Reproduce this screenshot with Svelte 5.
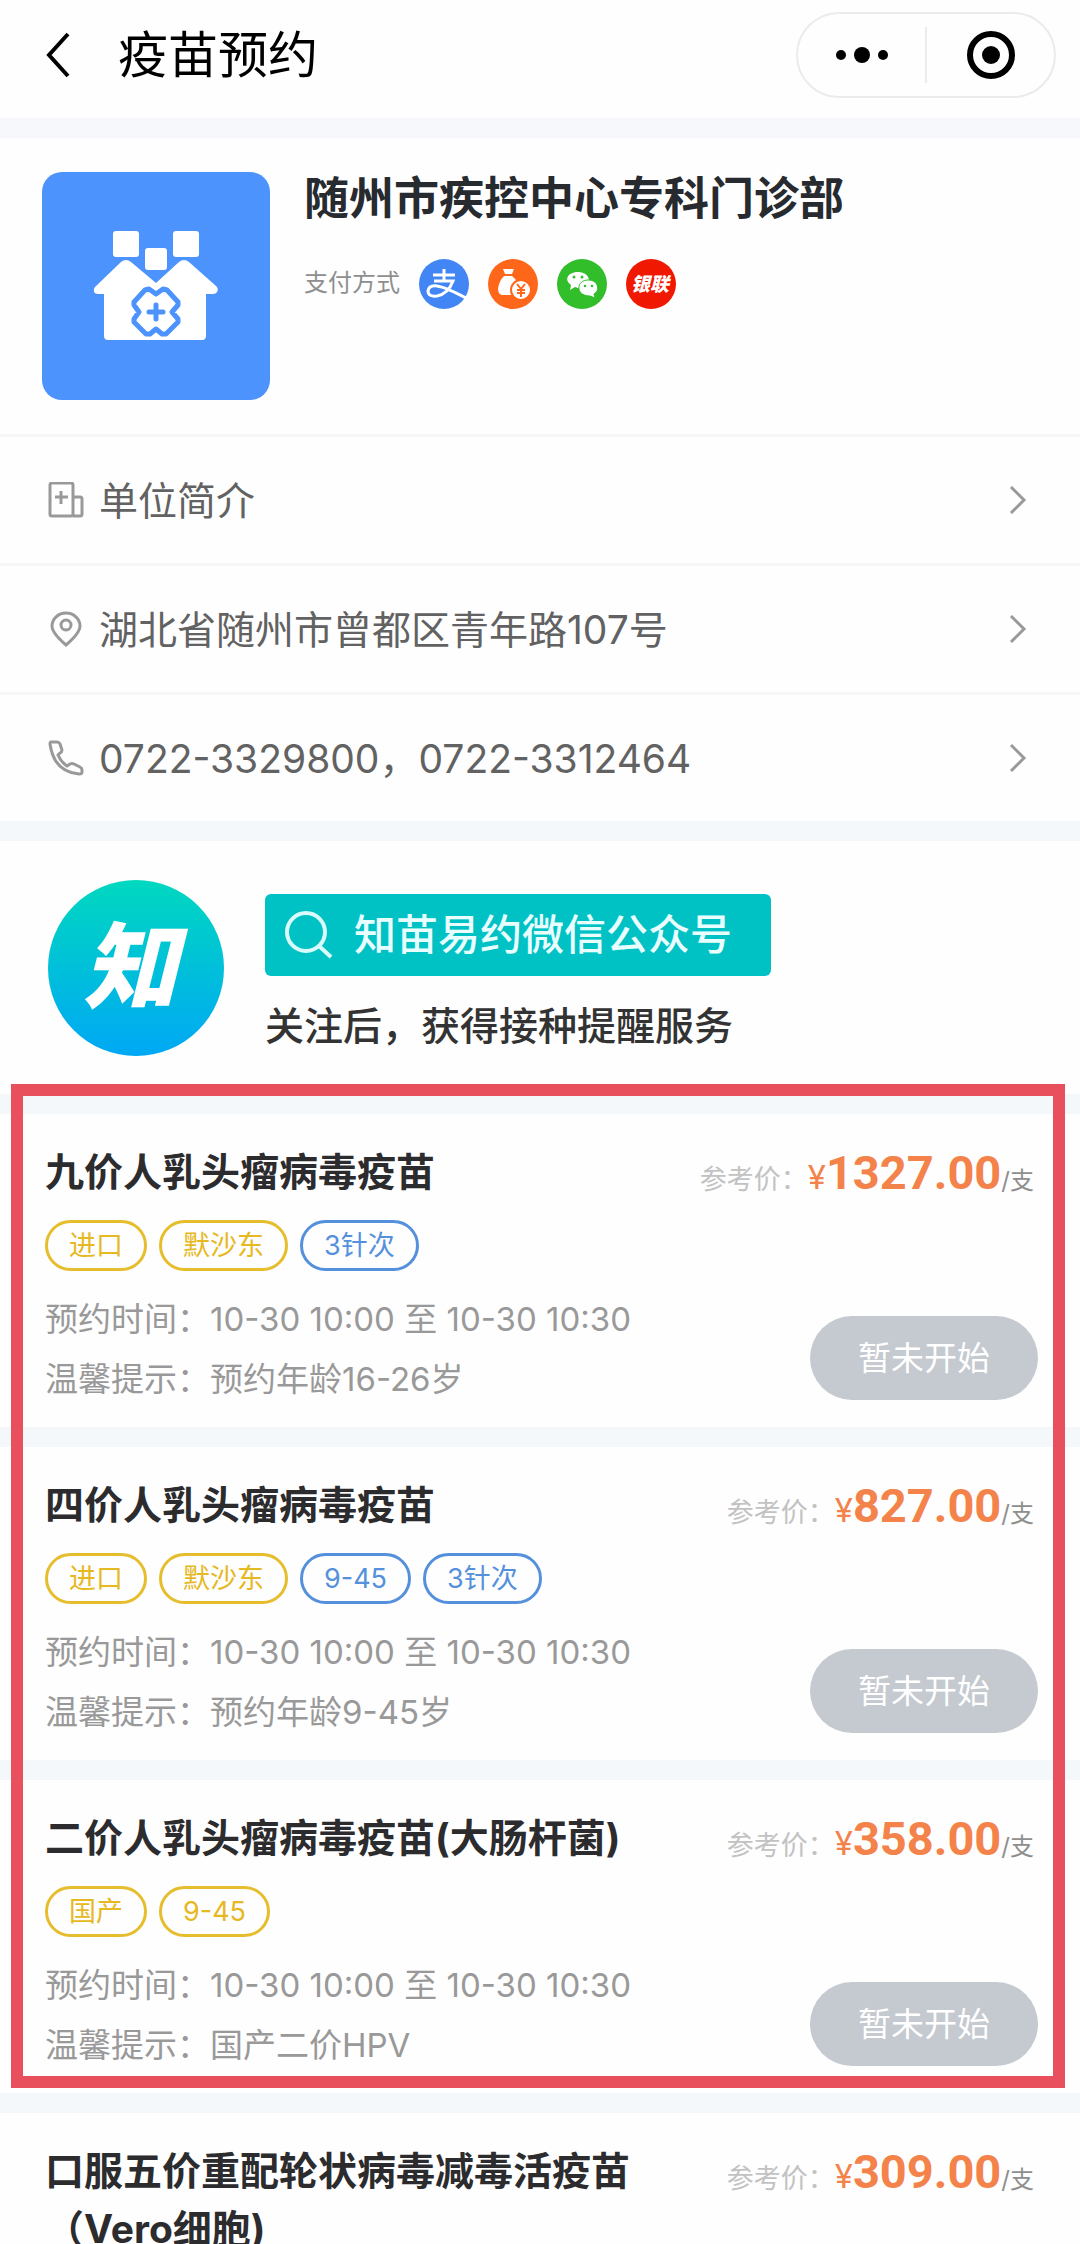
<script lang="ts">
	type Tag = { text: string; tone: 'gold' | 'blue' };
	type Vaccine = {
		name: string;
		price: string;
		tags: Tag[];
		time: string;
		hint: string;
	};

	const contacts = [
		{ icon: 'hospital', text: '单位简介', href: '#intro' },
		{ icon: 'pin', text: '湖北省随州市曾都区青年路107号', href: '#address' },
		{ icon: 'phone', text: '0722-3329800，0722-3312464', href: '#phone' }
	];

	const time = '10-30 10:00 至 10-30 10:30';

	const featured: Vaccine[] = [
		{
			name: '九价人乳头瘤病毒疫苗',
			price: '1327.00',
			tags: [
				{ text: '进口', tone: 'gold' },
				{ text: '默沙东', tone: 'gold' },
				{ text: '3针次', tone: 'blue' }
			],
			time,
			hint: '预约年龄16-26岁'
		},
		{
			name: '四价人乳头瘤病毒疫苗',
			price: '827.00',
			tags: [
				{ text: '进口', tone: 'gold' },
				{ text: '默沙东', tone: 'gold' },
				{ text: '9-45', tone: 'blue' },
				{ text: '3针次', tone: 'blue' }
			],
			time,
			hint: '预约年龄9-45岁'
		},
		{
			name: '二价人乳头瘤病毒疫苗(大肠杆菌)',
			price: '358.00',
			tags: [
				{ text: '国产', tone: 'gold' },
				{ text: '9-45', tone: 'gold' }
			],
			time,
			hint: '国产二价HPV'
		}
	];
</script>

{#snippet heading(name: string, price: string)}
	<div class="card-head">
		<h2>{name}</h2>
		<p class="price">
			<span class="price-label">参考价：</span><span class="yen">¥</span><strong>{price}</strong><span
				class="unit">/支</span
			>
		</p>
	</div>
{/snippet}

<div class="page">
	<header>
		<button class="back" aria-label="返回">
			<svg width="24" height="46" viewBox="0 0 24 46">
				<path d="M22 2 3 23 22 44" fill="none" stroke="#000" stroke-width="4" />
			</svg>
		</button>
		<h1>疫苗预约</h1>
		<div class="capsule">
			<button aria-label="更多">
				<svg width="52" height="18" viewBox="0 0 52 18">
					<circle cx="5" cy="9" r="5" />
					<circle cx="26" cy="9" r="8" />
					<circle cx="47" cy="9" r="5" />
				</svg>
			</button>
			<button aria-label="关闭">
				<svg width="50" height="50" viewBox="0 0 50 50">
					<circle cx="25" cy="25" r="21" fill="none" stroke="#000" stroke-width="6" />
					<circle cx="25" cy="25" r="9" />
				</svg>
			</button>
		</div>
	</header>

	<section class="clinic">
		<svg class="clinic-logo" viewBox="0 0 228 228">
			<rect width="228" height="228" rx="20" fill="#4d93fd" />
			<g fill="#fff">
				<rect x="71" y="59" width="26" height="26" rx="3" />
				<rect x="131" y="59" width="26" height="26" rx="3" />
				<rect x="103" y="76" width="22" height="22" rx="3" />
				<path
					d="M79 90q5-4 10 0l25 21 23-21q5-4 10 0l27 24q3 3 1 6-1 2-4 2h-7v42q0 4-4 4H66q-4 0-4-4v-42h-6q-3 0-4-2-1-3 1-5z"
				/>
			</g>
			<path
				d="M107 117l7 5 7-5 4 1 11 12v3l-6 7 6 7v3l-12 12h-4l-6-5-6 5h-4l-12-12v-3l5-7-5-7v-3l11-12z"
				fill="#fff"
				stroke="#4d93fd"
				stroke-width="5"
				stroke-linejoin="round"
			/>
			<path d="M114 133v14M107 140h14" stroke="#4d93fd" stroke-width="5" stroke-linecap="round" />
		</svg>
		<div>
			<h2>随州市疾控中心专科门诊部</h2>
			<div class="pay">
				<span>支付方式</span>
				<svg viewBox="0 0 50 50">
					<circle cx="25" cy="25" r="25" fill="#4285f4" />
					<path
						d="M14 16h22M25 10v12M15 22h19Q29 35 18 37 9 38 9 32q1-6 9-5 8 1 29 12"
						fill="none"
						stroke="#fff"
						stroke-width="3"
					/>
				</svg>
				<svg viewBox="0 0 50 50">
					<circle cx="25" cy="25" r="25" fill="#fe671a" />
					<path d="M15 10h11l-2 5h-7zM16 17h8q8 7 8 13 0 6-7 6H14q-4-1-4-6 1-8 6-13z" fill="#fff" />
					<circle cx="33" cy="31" r="10" fill="#fff" stroke="#fe671a" stroke-width="2" />
					<path
						d="m29 25 4 5 4-5M33 30v8M29 31h8M29 34h8"
						fill="none"
						stroke="#fe671a"
						stroke-width="2"
					/>
				</svg>
				<svg viewBox="0 0 50 50">
					<circle cx="25" cy="25" r="25" fill="#32bd2b" />
					<path d="M21 13c14 0 15 16 0 16l-3-1-5 3 1-5c-8-6-2-13 7-13z" fill="#fff" />
					<path
						d="M31 21c11 0 12 11 6 14l1 4-5-2c-15 0-14-16-2-16z"
						fill="#fff"
						stroke="#32bd2b"
						stroke-width="1"
					/>
					<g fill="#32bd2b">
						<circle cx="17" cy="18" r="1.500" />
						<circle cx="25" cy="18" r="1.500" />
						<circle cx="28" cy="27" r="1.300" />
						<circle cx="35" cy="27" r="1.300" />
					</g>
				</svg>
				<svg viewBox="0 0 50 50">
					<circle cx="25" cy="25" r="25" fill="#f01800" />
					<text class="union" x="24" y="32" text-anchor="middle">银联</text>
				</svg>
			</div>
		</div>
	</section>

	<nav>
		{#each contacts as item}
			<a href={item.href}>
				<svg class="row-icon" viewBox="0 0 36 36">
					{#if item.icon === 'hospital'}
						<rect x="2" y="1" width="23" height="33" rx="2" />
						<path d="M25 15h7q2 0 2 2v15q0 2-2 2h-7M13 9v13M7 15h13" />
					{:else if item.icon === 'pin'}
						<path d="M18 34Q4 22 4 15a14 13 0 0 1 28 0q0 7-14 19z" />
						<circle cx="18" cy="14" r="5" />
					{:else}
						<path
							d="M3 2h6q2 0 3 2l2 6q0 2-2 3l-2 2q3 7 9 11l3-2q2-1 4 0l6 3q2 1 2 3v2q0 2-3 2Q6 32 2 4q0-2 1-2z"
						/>
					{/if}
				</svg>
				<span>{item.text}</span>
				<svg class="chevron" viewBox="0 0 20 30">
					<path d="m3 2 13 13L3 28" />
				</svg>
			</a>
		{/each}
	</nav>

	<section class="promo">
		<svg class="promo-logo" viewBox="0 0 176 176">
			<defs>
				<linearGradient id="sea" x1="0" y1="0" x2="0" y2="1">
					<stop offset="0" stop-color="#00d8bf" />
					<stop offset="1" stop-color="#00a8f4" />
				</linearGradient>
			</defs>
			<circle cx="88" cy="88" r="88" fill="url(#sea)" />
			<text x="82" y="121" text-anchor="middle">知</text>
		</svg>
		<div>
			<a class="follow" href="#follow">
				<svg width="48" height="48" viewBox="0 0 48 48">
					<circle cx="21" cy="21" r="19" />
					<path d="m34 35 12 11" />
				</svg>
				<span>知苗易约微信公众号</span>
			</a>
			<p>关注后，获得接种提醒服务</p>
		</div>
	</section>

	<div class="featured">
		{#each featured as item}
			<article>
				{@render heading(item.name, item.price)}
				<ul>
					{#each item.tags as tag}
						<li class={tag.tone}>{tag.text}</li>
					{/each}
				</ul>
				<div class="card-body">
					<div>
						<p>预约时间：{item.time}</p>
						<p>温馨提示：{item.hint}</p>
					</div>
					<button>暂未开始</button>
				</div>
			</article>
		{/each}
	</div>
	<article>
		{@render heading('口服五价重配轮状病毒减毒活疫苗（Vero细胞)', '309.00')}
	</article>
</div>

<style>
	:global(body) {
		background: #fff;
	}
	.page {
		height: 100vh;
		overflow: hidden;
		background: #fefefe;
		color: #2c2c2e;
		font-family: Inter, 'Noto Sans CJK SC', sans-serif;
	}
	h1,
	h2,
	p,
	ul {
		margin: 0;
		padding: 0;
	}
	button {
		padding: 0;
		border: 0;
		background: none;
		font-family: inherit;
	}
	a {
		text-decoration: none;
	}
	svg {
		display: block;
		flex-shrink: 0;
	}
	header {
		display: flex;
		align-items: center;
		height: 118px;
		padding: 0 24px 8px 46px;
		box-sizing: border-box;
	}
	h1 {
		flex: 1;
		margin-left: 48px;
		font-size: 50px;
		line-height: 60px;
		font-weight: 400;
		color: #000;
	}
	.capsule {
		display: flex;
		align-items: center;
		width: 260px;
		height: 86px;
		box-sizing: border-box;
		border: 2px solid #ebebeb;
		border-radius: 43px;
	}
	.capsule button {
		flex: 1;
		height: 56px;
		display: flex;
		align-items: center;
		justify-content: center;
	}
	.capsule button + button {
		border-left: 2px solid #ebebeb;
	}
	.clinic {
		display: flex;
		gap: 34px;
		padding: 34px 42px;
		border-top: 20px solid #f6f8fc;
	}
	.clinic-logo {
		width: 228px;
		height: 228px;
	}
	.clinic h2 {
		font-size: 45px;
		line-height: 54px;
		color: #272b30;
	}
	.pay {
		display: flex;
		align-items: center;
		gap: 19px;
		margin-top: 33px;
		font-size: 24px;
		color: #8e8e8e;
	}
	.pay span {
		padding-bottom: 8px;
	}
	.pay svg {
		width: 50px;
		height: 50px;
	}
	.union {
		font-size: 19px;
		font-weight: 900;
		font-style: italic;
		fill: #fff;
	}
	nav a {
		display: flex;
		align-items: center;
		gap: 15px;
		height: 129px;
		padding: 0 52px 0 48px;
		box-sizing: border-box;
		border-top: 3px solid #f7f7f8;
		font-size: 39px;
		color: #626262;
	}
	nav span {
		flex: 1;
		padding-bottom: 4px;
	}
	nav svg {
		fill: none;
		stroke: #999;
		stroke-width: 3;
	}
	.row-icon {
		width: 36px;
		height: 36px;
	}
	.chevron {
		width: 20px;
		height: 30px;
	}
	.promo {
		display: flex;
		gap: 41px;
		padding: 39px 48px 38px;
		border-top: 20px solid #f5f8fb;
	}
	.promo-logo {
		width: 176px;
		height: 176px;
	}
	.promo-logo text {
		font-size: 94px;
		font-weight: 900;
		font-style: italic;
		fill: #fff;
	}
	.follow {
		display: flex;
		align-items: center;
		gap: 21px;
		height: 82px;
		margin-top: 14px;
		padding: 0 39px 0 20px;
		border-radius: 6px;
		background: #00c2c5;
		color: #e9ffff;
		font-size: 42px;
		font-weight: 500;
	}
	.follow span {
		padding-bottom: 8px;
	}
	.follow svg {
		fill: none;
		stroke: #d9fbfb;
		stroke-width: 4;
	}
	.promo p {
		margin-top: 22px;
		font-size: 39px;
		line-height: 56px;
		font-weight: 500;
		color: #333;
	}
	.featured {
		position: relative;
	}
	/* red marker drawn over the HPV vaccines */
	.featured::after {
		content: '';
		position: absolute;
		inset: -10px 15px 5px 11px;
		border: 12px solid #e9505d;
		pointer-events: none;
	}
	article {
		padding: 29px 42px 18px 45px;
		border-top: 20px solid #f5f8fb;
	}
	.card-head {
		display: flex;
		justify-content: space-between;
		align-items: flex-start;
	}
	.card-head h2 {
		max-width: 600px;
		font-size: 39px;
		line-height: 58px;
	}
	.price {
		padding: 10px 4px 0 0;
		line-height: 40px;
		font-size: 27px;
		white-space: nowrap;
		color: #c2c2c2;
	}
	.yen {
		font-size: 33px;
		color: #f3834a;
	}
	.price strong {
		font-family: Roboto, sans-serif;
		font-size: 47px;
		color: #f3834a;
	}
	.unit {
		font-size: 24px;
		color: #8e8e8e;
	}
	ul {
		display: flex;
		gap: 12px;
		margin-top: 19px;
		list-style: none;
	}
	li {
		padding: 0 21px;
		border: 3px solid;
		border-radius: 26px;
		font-size: 27px;
		line-height: 45px;
	}
	.gold {
		border-color: #e6bd2c;
		color: #e6b822;
	}
	.blue {
		border-color: #5590dc;
		color: #5590dc;
	}
	.card-body {
		display: flex;
		justify-content: space-between;
		align-items: flex-end;
		margin-top: 18px;
	}
	.card-body p {
		font-size: 33px;
		line-height: 60px;
		color: #999;
	}
	.card-body button {
		width: 228px;
		height: 84px;
		margin-bottom: 9px;
		padding-bottom: 4px;
		border-radius: 42px;
		background: #c5c9d0;
		color: #fff;
		font-size: 33px;
	}
</style>
